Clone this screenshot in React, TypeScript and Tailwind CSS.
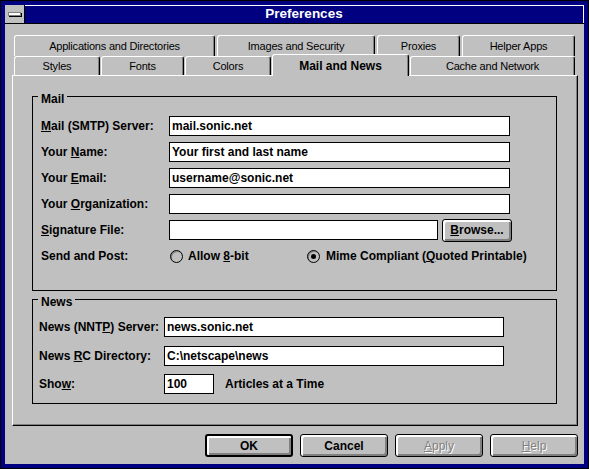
import type { ReactNode } from "react";

type TabDef = { label: string; w: string; active?: boolean };

const BACK_ROW: TabDef[] = [
  { label: "Applications and Directories", w: "w-[201px]" },
  { label: "Images and Security", w: "w-[158px]" },
  { label: "Proxies", w: "w-[83px]" },
  { label: "Helper Apps", w: "w-[113px]" },
];

const FRONT_ROW: TabDef[] = [
  { label: "Styles", w: "w-[86px]" },
  { label: "Fonts", w: "w-[83px]" },
  { label: "Colors", w: "w-[86px]" },
  { label: "Mail and News", w: "w-[137px]", active: true },
  { label: "Cache and Network", w: "w-[165px]" },
];

// letter with the keyboard-mnemonic underline
function U({ children }: { children: ReactNode }) {
  return <span className="underline underline-offset-[1px]">{children}</span>;
}

function Tab({ tab }: { tab: TabDef }) {
  return (
    <div
      className={`${tab.w} ${
        tab.active
          ? "relative z-10 -mb-px h-[22px] text-[12px] font-bold"
          : "h-full text-[11px] tracking-[-0.2px]"
      } flex items-center justify-center rounded-t-[3px] border-t border-r border-l border-t-white border-r-black border-l-white bg-[#c0c0c0] shadow-[inset_-1px_0_0_#808080]`}
    >
      {tab.label}
    </div>
  );
}

function Button({
  children,
  w = "w-[88px]",
  def,
  disabled,
}: {
  children: ReactNode;
  w?: string;
  def?: boolean;
  disabled?: boolean;
}) {
  return (
    <div
      className={`${w} ${def ? "border-2" : "border"} ${
        disabled
          ? "font-normal text-[#808080] [text-shadow:1px_1px_0_#fff]"
          : "font-bold"
      } flex h-[23px] items-center justify-center rounded-[3px] border-black bg-[#c0c0c0] text-[12px] shadow-[inset_1px_1px_0_#fff,inset_2px_2px_0_#fff,inset_-1px_-1px_0_#808080,inset_-2px_-2px_0_#808080]`}
    >
      {children}
    </div>
  );
}

function Group({
  title,
  className,
  children,
}: {
  title: string;
  className: string;
  children: ReactNode;
}) {
  return (
    <div className={`relative w-[525px] border border-black ${className}`}>
      <span className="absolute top-[-4px] left-[5px] bg-[#c0c0c0] px-[3px] leading-[12px] font-bold">
        {title}
      </span>
      {children}
    </div>
  );
}

function TextBox({ value, w }: { value?: string; w: string }) {
  return (
    <div
      className={`${w} h-[20px] border border-black bg-white pl-[2px] leading-[18px] font-bold whitespace-nowrap`}
    >
      {value}
    </div>
  );
}

function Radio({ checked }: { checked?: boolean }) {
  return (
    <div className="flex h-[13px] w-[13px] shrink-0 items-center justify-center rounded-full border border-black shadow-[inset_1px_1px_0_#808080]">
      {checked && <div className="h-[5px] w-[5px] rounded-full bg-black" />}
    </div>
  );
}

export default function App() {
  return (
    <div className="h-[469px] w-[589px] border border-black bg-[#000080] p-[4px] font-['Liberation_Sans',Arial,sans-serif] text-[12px] text-black">
      <div className="flex h-full flex-col">
        {/* title bar */}
        <div className="flex h-[19px] border-b border-black">
          <div className="flex w-[20px] items-center justify-center border-r border-black bg-[#c0c0c0]">
            <div className="h-[4px] w-[13px] border border-[#808080] bg-white shadow-[1px_1px_0_#000]" />
          </div>
          <div className="flex flex-1 items-center justify-center border-t border-r border-white text-[13.5px] font-bold text-white">
            Preferences
          </div>
        </div>

        {/* client */}
        <div className="flex flex-1 flex-col bg-[#c0c0c0]">
          <div className="mt-[11px] mr-[6px] ml-[7px]">
            <div className="flex h-[21px] gap-[2px] pl-[2px]">
              {BACK_ROW.map((t) => (
                <Tab key={t.label} tab={t} />
              ))}
            </div>
            <div className="flex h-[19px] items-end gap-[1px] pl-[2px]">
              {FRONT_ROW.map((t) => (
                <Tab key={t.label} tab={t} />
              ))}
            </div>

            {/* page */}
            <div className="flex h-[351px] flex-col gap-[8px] border border-t-white border-r-black border-b-black border-l-white pt-[20px] pl-[19px] shadow-[inset_-1px_-1px_0_#808080]">
              <Group title="Mail" className="h-[195px] pt-[16px] pl-[8px]">
                <div className="flex h-[26px] items-center">
                  <div className="w-[128px] font-bold">
                    <U>M</U>ail (SMTP) Server:
                  </div>
                  <TextBox value="mail.sonic.net" w="w-[341px]" />
                </div>
                <div className="flex h-[26px] items-center">
                  <div className="w-[128px] font-bold">
                    Your <U>N</U>ame:
                  </div>
                  <TextBox value="Your first and last name" w="w-[341px]" />
                </div>
                <div className="flex h-[26px] items-center">
                  <div className="w-[128px] font-bold">
                    Your <U>E</U>mail:
                  </div>
                  <TextBox value="username@sonic.net" w="w-[341px]" />
                </div>
                <div className="flex h-[26px] items-center">
                  <div className="w-[128px] font-bold">
                    Your <U>O</U>rganization:
                  </div>
                  <TextBox w="w-[341px]" />
                </div>
                <div className="flex h-[26px] items-center">
                  <div className="w-[128px] font-bold">
                    <U>S</U>ignature File:
                  </div>
                  <TextBox w="w-[269px]" />
                  <div className="ml-[4px]">
                    <Button w="w-[70px]">
                      <span>
                        <U>B</U>rowse...
                      </span>
                    </Button>
                  </div>
                </div>
                <div className="flex h-[26px] items-center font-bold">
                  <div className="w-[128px]">Send and Post:</div>
                  <div className="flex w-[138px] items-center gap-[5px] pl-[1px]">
                    <Radio />
                    <span>
                      Allow <U>8</U>-bit
                    </span>
                  </div>
                  <div className="flex items-center gap-[6px]">
                    <Radio checked />
                    <span>
                      Mime Compliant (<U>Q</U>uoted Printable)
                    </span>
                  </div>
                </div>
              </Group>

              <Group title="News" className="h-[105px] pt-[12px] pl-[6px]">
                <div className="flex h-[29px] items-center">
                  <div className="w-[125px] font-bold">
                    News (NNT<U>P</U>) Server:
                  </div>
                  <TextBox value="news.sonic.net" w="w-[340px]" />
                </div>
                <div className="flex h-[29px] items-center">
                  <div className="w-[125px] font-bold">
                    News <U>R</U>C Directory:
                  </div>
                  <TextBox value="C:\netscape\news" w="w-[340px]" />
                </div>
                <div className="flex h-[28px] items-center">
                  <div className="w-[125px] font-bold">
                    Sho<U>w</U>:
                  </div>
                  <TextBox value="100" w="w-[50px]" />
                  <span className="ml-[11px] font-bold">Articles at a Time</span>
                </div>
              </Group>
            </div>
          </div>

          {/* dialog buttons */}
          <div className="mt-[8px] flex justify-end gap-[7px] pr-[6px]">
            <Button def>OK</Button>
            <Button>Cancel</Button>
            <Button disabled>
              <span>
                <U>A</U>pply
              </span>
            </Button>
            <Button disabled>
              <span>
                <U>H</U>elp
              </span>
            </Button>
          </div>
        </div>
      </div>
    </div>
  );
}
